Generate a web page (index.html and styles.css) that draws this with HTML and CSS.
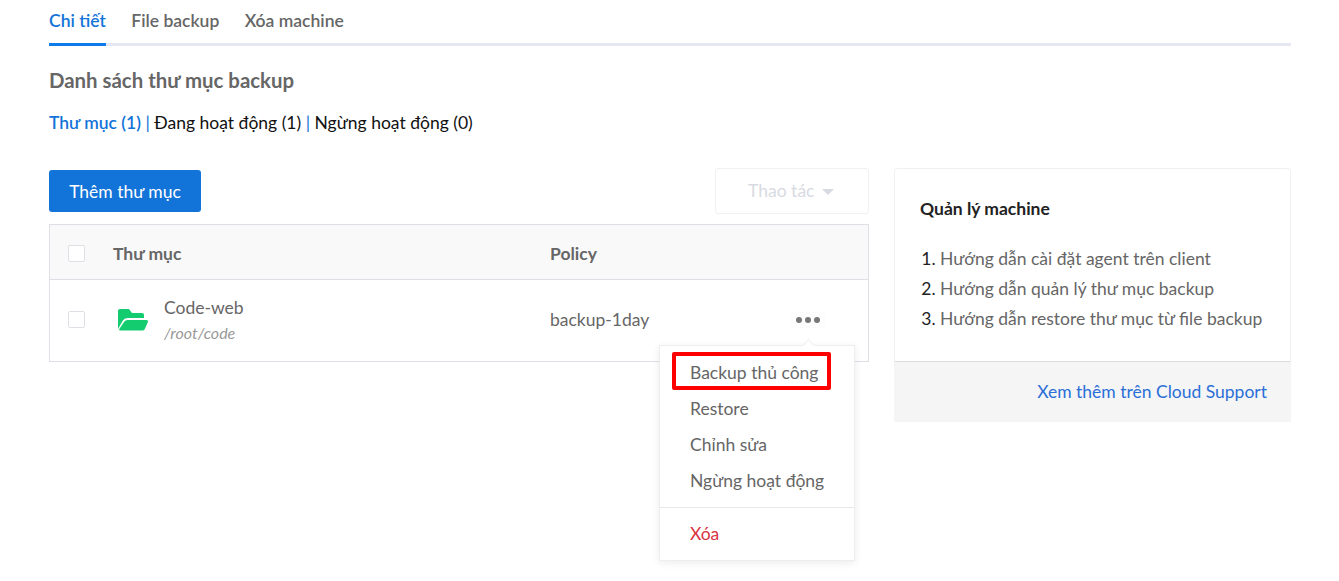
FILE: index.html
```html
<!DOCTYPE html>
<html lang="en">
<head>
    <meta charset="UTF-8">
    <meta name="viewport" content="width=device-width, initial-scale=1.0">
    <title>Chi tiết machine</title>
    <link rel="stylesheet" href="styles.css">
</head>
<body>
    <div class="tabs">
        <a class="tab active">Chi tiết</a>
        <a class="tab">File backup</a>
        <a class="tab">Xóa machine</a>
    </div>

    <h2 class="section-title">Danh sách thư mục backup</h2>

    <p class="filters">
        <a class="filter active">Thư mục (1)</a>
        <span class="sep">|</span>
        <a class="filter">Đang hoạt động (1)</a>
        <span class="sep">|</span>
        <a class="filter">Ngừng hoạt động (0)</a>
    </p>

    <div class="content">
        <div class="main">
            <div class="toolbar">
                <button class="btn-primary">Thêm thư mục</button>
                <button class="btn-disabled">Thao tác <span class="caret"></span></button>
            </div>

            <div class="table">
                <div class="row head">
                    <div class="col-check"><span class="checkbox"></span></div>
                    <div class="col-name">Thư mục</div>
                    <div class="col-policy">Policy</div>
                </div>
                <div class="row body">
                    <div class="col-check"><span class="checkbox"></span></div>
                    <div class="col-name folder">
                        <svg class="folder-icon" viewBox="0 0 30 22" width="30" height="22">
                            <path fill="#14cc70" d="M0 2a2 2 0 0 1 2-2h9l3 4h10a2 2 0 0 1 2 2v3H9.500a5.500 5.500 0 0 0-4.800 2.800L0 20z"/>
                            <path fill="#14cc70" d="M9.500 11H28.500a1.500 1.500 0 0 1 1.400 2.100l-3.100 6.900a2.500 2.500 0 0 1-2.300 1.500H2.200a1 1 0 0 1-.9-1.500l4.900-7.200a4 4 0 0 1 3.300-1.800z"/>
                        </svg>
                        <div>
                            <div class="folder-name">Code-web</div>
                            <div class="folder-path">/root/code</div>
                        </div>
                    </div>
                    <div class="col-policy">backup-1day</div>
                    <div class="col-more"><span class="dots"><i></i><i></i><i></i></span></div>
                </div>

                <div class="menu">
                    <a class="menu-item highlighted">Backup thủ công</a>
                    <a class="menu-item">Restore</a>
                    <a class="menu-item">Chỉnh sửa</a>
                    <a class="menu-item">Ngừng hoạt động</a>
                    <div class="menu-divider"></div>
                    <a class="menu-item danger">Xóa</a>
                </div>
            </div>
        </div>

        <div class="side">
            <div class="side-card">
                <h3>Quản lý machine</h3>
                <ol>
                    <li><a>Hướng dẫn cài đặt agent trên client</a></li>
                    <li><a>Hướng dẫn quản lý thư mục backup</a></li>
                    <li><a>Hướng dẫn restore thư mục từ file backup</a></li>
                </ol>
            </div>
            <div class="side-footer"><a>Xem thêm trên Cloud Support</a></div>
        </div>
    </div>
</body>
</html>
```

FILE: styles.css
```css
body {
    font-family: 'Lato', sans-serif;
    background: white;
    margin: 0;
    padding: 0 48px 0 49px;
    min-height: 100vh;
    box-sizing: border-box;
    color: #666;
    font-size: 17.5px;
}
.tabs {
    display: flex;
    gap: 25.5px;
    height: 46px;
    box-sizing: border-box;
    border-bottom: 3px solid #e6e8f1;
}
.tab {
    height: 46px;
    box-sizing: border-box;
    padding-top: 10px;
    font-weight: 600;
    line-height: 22px;
    color: #666;
}
.tab.active {
    color: #1273d8;
    border-bottom: 3px solid #0e7bea;
}
.section-title {
    margin: 22px 0 0;
    font-size: 20.4px;
    line-height: 24px;
    font-weight: 700;
    color: #666;
}
.filters {
    margin: 19px 0 0;
    line-height: 24px;
    color: #111;
}
.filter.active { color: #1273d8; font-weight: 600; }
.sep { color: #1273d8; }
.content {
    display: flex;
    justify-content: space-between;
    margin-top: 35px;
}
.main { width: 820px; }
.toolbar {
    display: flex;
    justify-content: space-between;
    margin-bottom: 10px;
    height: 44px;
}
.btn-primary {
    width: 152px;
    height: 42px;
    background: #1273d8;
    color: white;
    border: none;
    border-radius: 3px;
    font-family: inherit;
    font-size: 17.5px;
    padding: 0;
}
.btn-disabled {
    width: 154px;
    margin-top: -2px;
    height: 46px;
    background: white;
    color: #d8dae2;
    border: 1px solid #f0f1f4;
    border-radius: 3px;
    font-family: inherit;
    font-size: 17.5px;
    padding: 0 2px 2px 0;
}
.caret {
    display: inline-block;
    margin-left: 3px;
    vertical-align: 2px;
    border-left: 6px solid transparent;
    border-right: 6px solid transparent;
    border-top: 6px solid #d8dae2;
}
.table {
    position: relative;
    border: 1px solid #dfe0e6;
}
.row {
    display: flex;
    align-items: center;
}
.row.head {
    height: 55px;
    padding-top: 2px;
    box-sizing: border-box;
    background: #f9f9fa;
    border-bottom: 1px solid #dfe0e6;
    font-weight: 700;
    color: #666;
}
.row.body {
    height: 81px;
    padding-bottom: 2px;
    box-sizing: border-box;
}
.col-check {
    width: 63px;
    padding-left: 18px;
    box-sizing: border-box;
    display: flex;
}
.checkbox {
    width: 15px;
    height: 15px;
    border: 1px solid #dfe0e6;
    border-radius: 2px;
    background: white;
}
.col-name { width: 437px; }
.col-policy { width: 230px; }
.folder {
    display: flex;
    align-items: center;
    gap: 16px;
    padding-left: 5px;
    box-sizing: border-box;
}
.folder-icon { flex: none; }
.folder-name {
    line-height: 24px;
    color: #666;
}
.folder-path {
    margin-top: 3px;
    font-size: 16px;
    font-style: italic;
    line-height: 20px;
    color: #999;
}
.col-more { display: flex; padding-left: 11px; }
.dots {
    display: flex;
    gap: 3px;
    padding: 5px;
    background: #fdfdfd;
}
.dots i {
    width: 6px;
    height: 6px;
    border-radius: 50%;
    background: #777;
}
.menu {
    position: absolute;
    top: 120px;
    right: 13px;
    width: 196px;
    height: 216px;
    box-sizing: border-box;
    padding-top: 9px;
    background: white;
    border: 1px solid #eee;
    box-shadow: 0px 2px 8px rgba(0, 0, 0, 0.08);
}
.menu::before {
    content: "";
    position: absolute;
    top: -5px;
    right: 41px;
    width: 8px;
    height: 8px;
    background: white;
    border-top: 1px solid #eee;
    border-left: 1px solid #eee;
    transform: rotate(45deg);
}
.menu-item {
    display: block;
    height: 36px;
    line-height: 36px;
    padding-left: 30px;
    color: #666;
}
.menu-item.danger { color: #d9333f; }
.menu-item.highlighted {
    position: relative;
}
.menu-item.highlighted::after {
    content: "";
    position: absolute;
    top: -3px;
    left: 12px;
    width: 159px;
    height: 38px;
    box-sizing: border-box;
    border: 4px solid #f00;
    border-radius: 2px;
}
.menu-divider {
    height: 1px;
    margin: 8px 0;
    background: #e8e8e8;
}
.side { width: 397px; margin-top: -2px; }
.side-card {
    height: 194px;
    box-sizing: border-box;
    padding: 30px 25px 0;
    background: white;
    border: 1px solid #f0f0f2;
    border-bottom: 1px solid #ddd;
    border-radius: 4px 4px 0 0;
}
.side-card h3 {
    margin: 0;
    font-size: 17.5px;
    line-height: 20px;
    font-weight: 700;
    color: #222;
}
.side-card ol {
    margin: 25px 0 0;
    padding-left: 20px;
    color: #222;
}
.side-card li {
    line-height: 30px;
}
.side-card li a { color: #666; }
.side-footer {
    height: 60px;
    box-sizing: border-box;
    background: #f5f5f6;
    padding: 18px 24px 0 0;
    line-height: 24px;
    text-align: right;
    color: #2b6fd6;
}
```
